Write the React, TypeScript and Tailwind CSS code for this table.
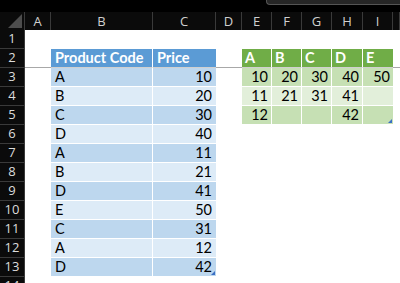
import React from 'react';

const grid = 'grid grid-cols-[25px_26px_102px_63px_26px_30px_30px_30px_31px_30px_1fr]';
const letters = ['A', 'B', 'C', 'D', 'E', 'F', 'G', 'H', 'I', ''];

const blueRows: [string, number][] = [
  ['A', 10], ['B', 20], ['C', 30], ['D', 40], ['A', 11], ['B', 21],
  ['D', 41], ['E', 50], ['C', 31], ['A', 12], ['D', 42],
];

const greenRows: (number | null)[][] = [
  [10, 20, 30, 40, 50],
  [11, 21, 31, 41, null],
  [12, null, null, 42, null],
];

function Handle() {
  return (
    <svg width="4" height="4" viewBox="0 0 4 4" className="absolute right-[1px] bottom-[1px]">
      <polygon points="4,0 4,4 0,4" fill="#3a6fc4" />
    </svg>
  );
}

function RowHead({ n }: { n: number }) {
  return (
    <div className="h-[19px] flex items-center justify-center border-b border-r border-[#3a3a3a] bg-[#0b0b0b] text-[13px] text-[#dcdcdc] font-['Open_Sans',sans-serif]">
      {n}
    </div>
  );
}

export default function App() {
  const rows = Array.from({ length: 14 }, (_, i) => i + 1);

  return (
    <div className="w-[400px] h-[283px] overflow-hidden bg-white font-['Lato',sans-serif] text-[14.5px] text-black">
      <div className="h-[12px] bg-black flex justify-end">
        <div className="w-[134px] h-[5px] bg-[#262626] border-l border-b border-[#555] rounded-bl-[4px]" />
      </div>

      <div className={`${grid} h-[18px] bg-[#0b0b0b] text-[13px] text-[#d0d0d0] font-['Open_Sans',sans-serif]`}>
        <div className="border-r border-[#3a3a3a] flex items-end justify-end pr-[2px] pb-[2px]">
          <svg width="14" height="14" viewBox="0 0 14 14">
            <polygon points="14,0 14,14 0,14" fill="#4d4d4d" />
          </svg>
        </div>
        {letters.map((l, i) => (
          <div key={i} className="border-r border-[#3a3a3a] flex items-center justify-center leading-none">
            {l}
          </div>
        ))}
      </div>

      {rows.map((r) => {
        const freeze = r === 2 ? 'border-b border-[#a8a8a8]' : '';
        const blue = r >= 3 && r <= 13 ? blueRows[r - 3] : null;
        const blueBg = r % 2 === 1 ? 'bg-[#bdd7ee]' : 'bg-[#ddebf7]';
        const green = r >= 3 && r <= 5 ? greenRows[r - 3] : null;
        const greenBg = r % 2 === 1 ? 'bg-[#c6e0b4]' : 'bg-[#e2efda]';

        return (
          <div key={r} className={`${grid} h-[19px]`}>
            <RowHead n={r} />
            <div className={`h-[19px] ${freeze}`} />

            {r === 2 ? (
              <>
                <div className="h-[19px] bg-[#5b9bd5] text-white font-bold pl-[4px] flex items-center border-r border-white border-b border-b-[#d0d0d0]">
                  Product Code
                </div>
                <div className="h-[19px] bg-[#5b9bd5] text-white font-bold pl-[4px] flex items-center border-b border-b-[#d0d0d0]">
                  Price
                </div>
              </>
            ) : blue ? (
              <>
                <div className={`h-[19px] ${blueBg} pl-[4px] flex items-center border-r border-b border-white`}>
                  {blue[0]}
                </div>
                <div className={`relative h-[19px] ${blueBg} pr-[4px] flex items-center justify-end border-b border-white`}>
                  {blue[1]}
                  {r === 13 && <Handle />}
                </div>
              </>
            ) : (
              <>
                <div className={`h-[19px] ${freeze}`} />
                <div className={`h-[19px] ${freeze}`} />
              </>
            )}

            <div className={`h-[19px] ${freeze}`} />

            {r === 2
              ? ['A', 'B', 'C', 'D', 'E'].map((h, i) => (
                  <div
                    key={h}
                    className={`h-[19px] bg-[#70ad47] text-white font-bold pl-[3px] flex items-center border-b border-b-[#d0d0d0] ${i < 4 ? 'border-r border-r-white' : ''}`}
                  >
                    {h}
                  </div>
                ))
              : green
                ? green.map((v, i) => (
                    <div
                      key={i}
                      className={`relative h-[19px] ${greenBg} pr-[3px] flex items-center justify-end border-b border-white ${i < 4 ? 'border-r' : ''}`}
                    >
                      {v ?? ''}
                      {r === 5 && i === 4 && <Handle />}
                    </div>
                  ))
                : [0, 1, 2, 3, 4].map((i) => <div key={i} className="h-[19px]" />)}

            <div className={`h-[19px] ${freeze}`} />
          </div>
        );
      })}
    </div>
  );
}
